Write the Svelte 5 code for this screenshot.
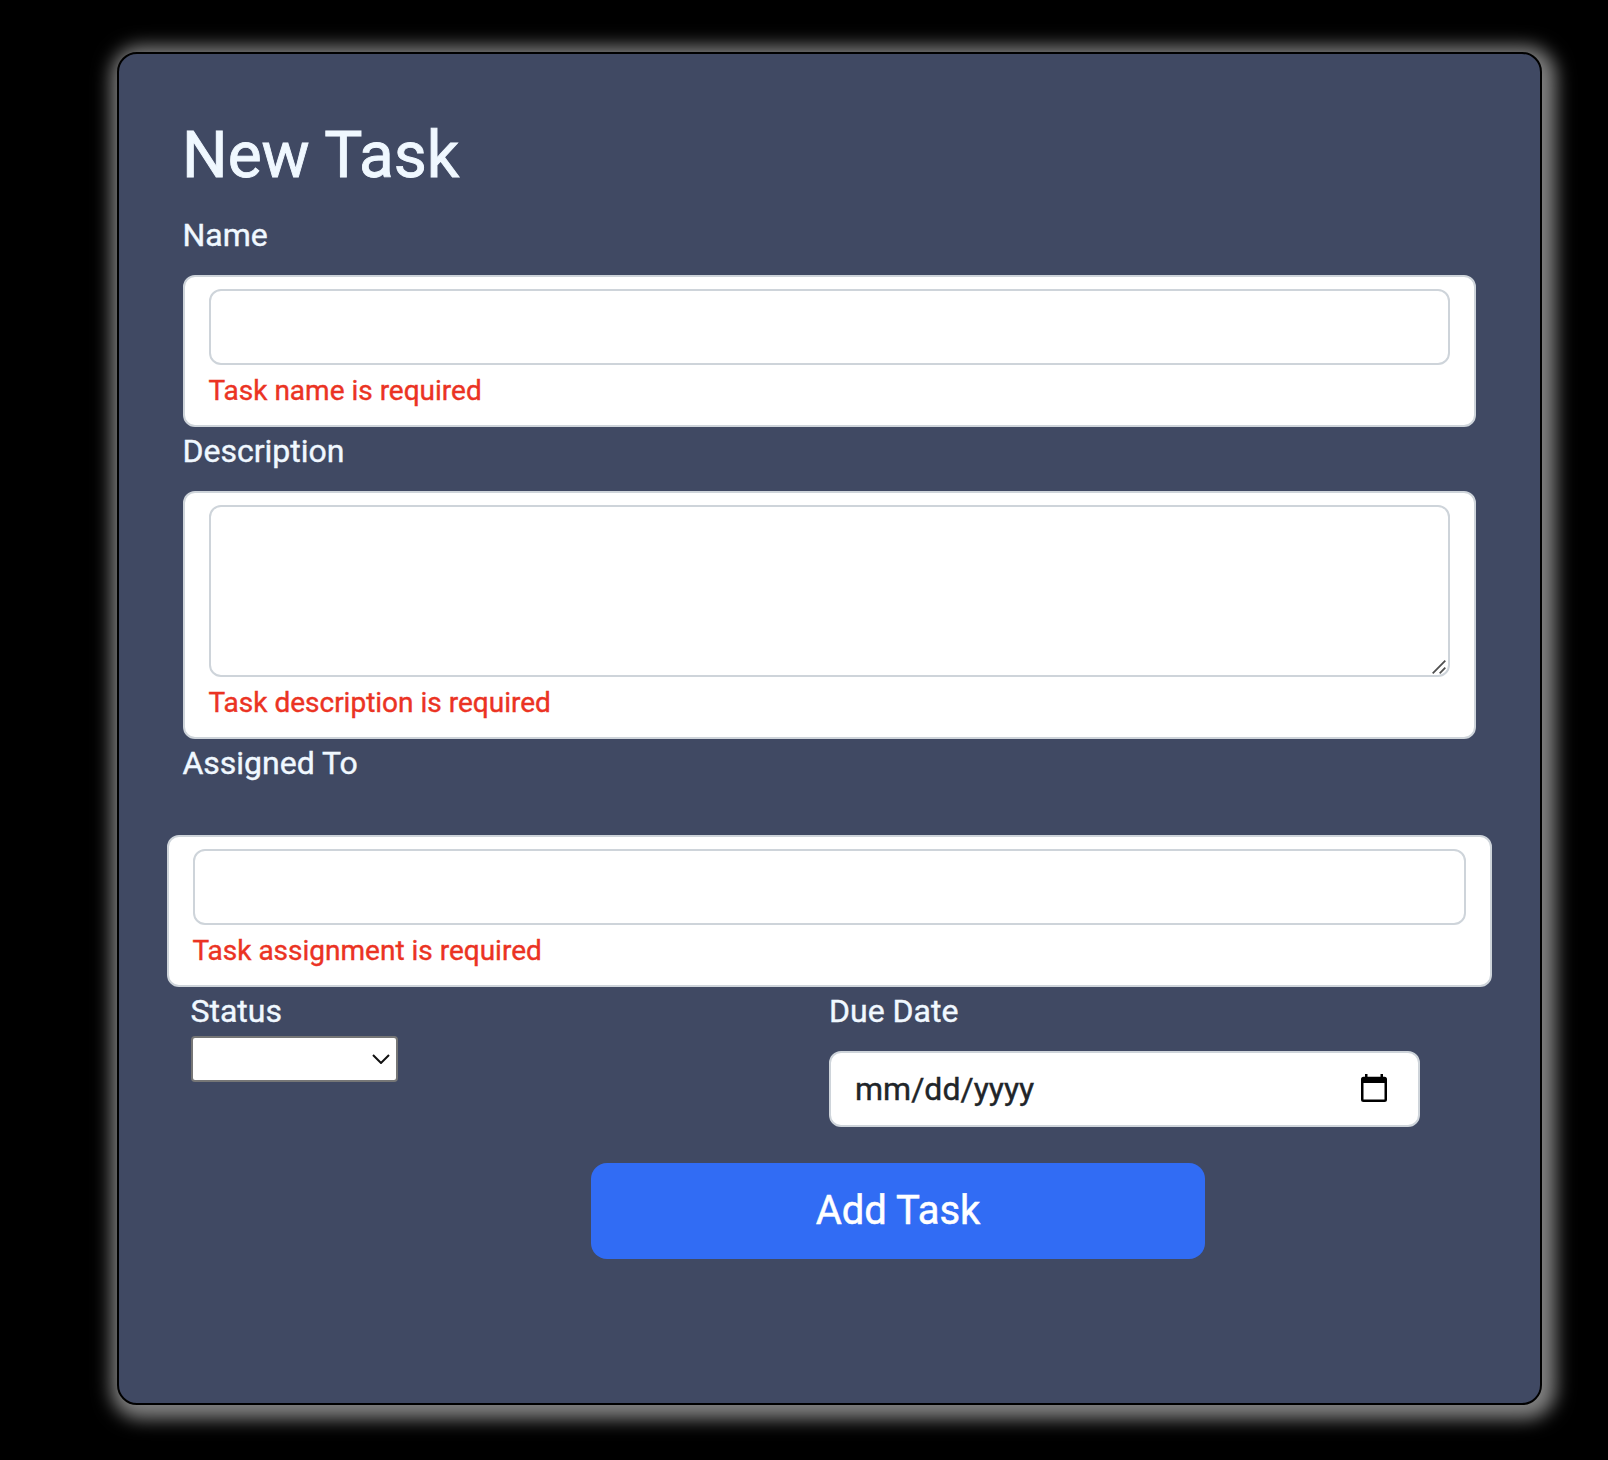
<script>
  let name = $state('');
  let description = $state('');
  let assignee = $state('');
  let status = $state('');
</script>

<main class="card">
  <h1>New Task</h1>

  <label for="name">Name</label>
  <div class="field">
    <input id="name" class="control" bind:value={name} />
    <span class="error">Task name is required</span>
  </div>

  <label for="description">Description</label>
  <div class="field">
    <div class="area">
      <textarea id="description" class="control" bind:value={description}></textarea>
      <svg class="grip" viewBox="0 0 14 14" aria-hidden="true">
        <path d="M0.7 13.3 13.3 0.7M7.7 13.3 13.3 7.7" />
      </svg>
    </div>
    <span class="error">Task description is required</span>
  </div>

  <label for="assignee" class="spaced">Assigned To</label>
  <div class="field wide">
    <input id="assignee" class="control" bind:value={assignee} />
    <span class="error">Task assignment is required</span>
  </div>

  <div class="columns">
    <div class="status">
      <label for="status">Status</label>
      <div class="select">
        <select id="status" bind:value={status}><option value=""></option></select>
        <svg class="chevron" viewBox="0 0 18 10" aria-hidden="true">
          <path d="M1 1 9 9 17 1" />
        </svg>
      </div>
    </div>
    <div class="due">
      <label for="due">Due Date</label>
      <div id="due" class="date">
        <span>mm/dd/yyyy</span>
        <svg class="calendar" viewBox="0 0 26 28" aria-hidden="true">
          <path
            fill-rule="evenodd"
            d="M4 0h2.500v2.700h13V0H22v2.700h1.500A2.500 2.500 0 0 1 26 5.200v20.300a2.500 2.500 0 0 1-2.500 2.500h-21A2.500 2.500 0 0 1 0 25.500V5.200A2.500 2.500 0 0 1 2.500 2.700H4zM2.500 9v16.500h21V9z"
          />
        </svg>
      </div>
    </div>
  </div>

  <button type="button">Add Task</button>
</main>

<style>
  :global(html) {
    background: #000;
  }

  :global(body) {
    display: flow-root;
    min-height: 100vh;
    margin: 0;
    background: #000;
    font-family: Roboto, 'Liberation Sans', sans-serif;
    font-size: 32px;
    line-height: 48px;
  }

  .card {
    box-sizing: border-box;
    width: 1425px;
    height: 1353px;
    margin: 52px 0 0 117px;
    padding: 64px;
    border: 2px solid #000;
    border-radius: 20px;
    background: #404963;
    box-shadow: 4px 4px 18px 10px #808080;
    color: aliceblue;
    -webkit-text-stroke: 0.4px currentColor;
  }

  h1 {
    margin: 0 0 18px;
    font-size: 64px;
    font-weight: 400;
    line-height: 75px;
    text-indent: -1px;
    -webkit-text-stroke: 0.9px currentColor;
  }

  label {
    display: block;
    margin: 0 0 16px;
    text-indent: -0.6px;
  }

  .spaced {
    margin-bottom: 48px;
  }

  .field,
  .control,
  .date {
    box-sizing: border-box;
    border: 2px solid #ced4da;
    border-radius: 12px;
    background: #fff;
  }

  .field {
    padding: 12px 24px;
  }

  .wide {
    margin: 0 -16px;
  }

  .control {
    display: block;
    width: 100%;
    height: 76px;
    padding: 12px 24px;
    font: inherit;
    color: #212529;
    outline: none;
  }

  .area {
    position: relative;
  }

  textarea.control {
    height: 172px;
    resize: none;
  }

  .grip {
    position: absolute;
    right: 4px;
    bottom: 3px;
    width: 14px;
    height: 14px;
    fill: none;
    stroke: #505050;
    stroke-width: 1.8;
  }

  .error {
    display: block;
    height: 48px;
    font-size: 28px;
    line-height: 51px;
    text-indent: -0.6px;
    color: #eb3323;
  }

  .columns {
    display: flex;
    padding-left: 8px;
  }

  .status {
    width: 638px;
  }

  .status label {
    margin-bottom: 1px;
  }

  .select {
    position: relative;
    width: 207px;
    height: 46px;
  }

  select {
    box-sizing: border-box;
    width: 100%;
    height: 100%;
    display: block;
    appearance: none;
    border: 2px solid #767676;
    border-radius: 4px;
    background: #fff;
  }

  .chevron {
    position: absolute;
    right: 8px;
    top: 18px;
    width: 18px;
    height: 10px;
    fill: none;
    stroke: #111;
    stroke-width: 2;
  }

  .due {
    width: 591px;
  }

  .due label {
    text-indent: 0;
  }

  .date {
    display: flex;
    align-items: center;
    justify-content: space-between;
    height: 76px;
    padding: 0 31px 0 24px;
    color: #212529;
  }

  .calendar {
    width: 26px;
    height: 28px;
    margin-bottom: 2px;
    fill: #000;
  }

  button {
    display: block;
    width: 614px;
    height: 96px;
    margin: 36px 0 0 408px;
    padding: 0;
    border: 0;
    border-radius: 16px;
    background: #316cf4;
    color: #fff;
    font: 40px/60px Roboto, 'Liberation Sans', sans-serif;
    -webkit-text-stroke: 0.5px currentColor;
  }
</style>
